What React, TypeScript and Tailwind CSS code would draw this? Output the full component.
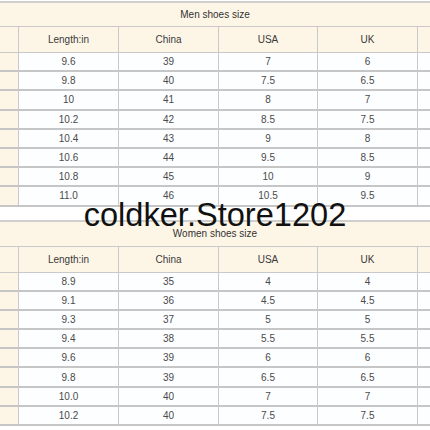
import React from "react";

type SizeRow = [string, string, string, string];

const menRows: SizeRow[] = [
  ["9.6", "39", "7", "6"],
  ["9.8", "40", "7.5", "6.5"],
  ["10", "41", "8", "7"],
  ["10.2", "42", "8.5", "7.5"],
  ["10.4", "43", "9", "8"],
  ["10.6", "44", "9.5", "8.5"],
  ["10.8", "45", "10", "9"],
  ["11.0", "46", "10.5", "9.5"],
];

const womenRows: SizeRow[] = [
  ["8.9", "35", "4", "4"],
  ["9.1", "36", "4.5", "4.5"],
  ["9.3", "37", "5", "5"],
  ["9.4", "38", "5.5", "5.5"],
  ["9.6", "39", "6", "6"],
  ["9.8", "39", "6.5", "6.5"],
  ["10.0", "40", "7", "7"],
  ["10.2", "40", "7.5", "7.5"],
];

const cols = "grid grid-cols-[18px_100px_100px_99px_100px_1fr]";

// one size chart block: title bar, column header, data rows
const SizeTable = ({ title, rows, titleClass }: { title: string; rows: SizeRow[]; titleClass: string }) => (
  <div className="border-t-2 border-[#cfcfcf]">
    <div className={`${titleClass} flex items-center justify-center bg-[#fdf6e7] border-b border-[#c9c9c9] text-[10px] text-[#333]`}>
      {title}
    </div>
    <div className={`${cols} h-[26px] bg-[#fdf6e7] border-b border-[#c9c9c9] text-[10px] text-[#3a3a3a]`}>
      <div />
      {["Length:in", "China", "USA", "UK"].map((h) => (
        <div key={h} className="flex items-center justify-center border-l border-[#c9c9c9]">
          {h}
        </div>
      ))}
      <div className="border-l border-[#c9c9c9]" />
    </div>
    {rows.map((r, i) => (
      <div key={i} className={`${cols} h-[19.2px] bg-[#fdfeff] border-b-2 border-[#c6c6c6] text-[10px] text-[#4a4a4a]`}>
        <div className="bg-[#fdf6e7]" />
        {r.map((v, j) => (
          <div key={j} className="flex items-center justify-center border-l border-[#c9c9c9]">
            {v}
          </div>
        ))}
        <div className="border-l border-[#c9c9c9]" />
      </div>
    ))}
  </div>
);

export default function App() {
  return (
    <div className="relative w-[430px] h-[430px] overflow-hidden bg-white font-['Liberation_Sans',Arial,sans-serif]">
      <div className="pt-[1px]">
        <SizeTable title="Men shoes size" rows={menRows} titleClass="h-[24px]" />
      </div>
      <div className="mt-[13px]">
        <SizeTable title="Women shoes size" rows={womenRows} titleClass="h-[25px]" />
      </div>
      {/* shop watermark over the gap */}
      <div className="absolute left-0 right-0 top-[198px] text-center text-[32.6px] leading-[33px] text-[#111]">
        coldker.Store1202
      </div>
    </div>
  );
}
